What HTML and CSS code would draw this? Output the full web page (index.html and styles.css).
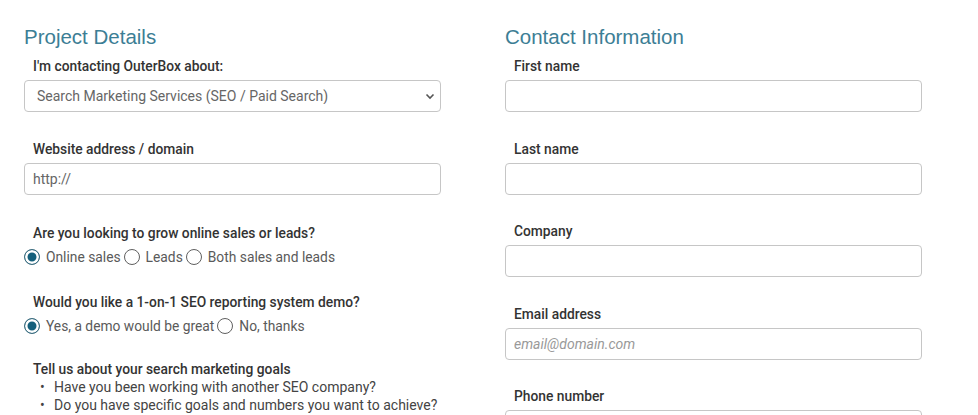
FILE: index.html
```html
<!DOCTYPE html>
<html lang="en">
<head>
  <meta charset="UTF-8" />
  <meta name="viewport" content="width=device-width, initial-scale=1.0" />
  <title>Contact OuterBox</title>
  <link rel="stylesheet" href="styles.css">
</head>
<body>
  <form class="contact-form">
    <section class="column">
      <h2>Project Details</h2>

      <div class="field">
        <label for="topic">I'm contacting OuterBox about:</label>
        <div class="select-wrap">
          <select id="topic">
            <option>Search Marketing Services (SEO / Paid Search)</option>
          </select>
          <svg class="chevron" width="10" height="7" viewBox="0 0 10 7">
            <path d="M1.5 1.5 L5 5 L8.5 1.5" fill="none" stroke="#555" stroke-width="1.6" />
          </svg>
        </div>
      </div>

      <div class="field field-website">
        <label for="website">Website address / domain</label>
        <input id="website" type="text" value="http://">
      </div>

      <div class="field field-radio">
        <label>Are you looking to grow online sales or leads?</label>
        <div class="radios">
          <input type="radio" name="goal" id="goal-sales" checked><label for="goal-sales">Online sales</label>
          <input type="radio" name="goal" id="goal-leads"><label for="goal-leads">Leads</label>
          <input type="radio" name="goal" id="goal-both"><label for="goal-both">Both sales and leads</label>
        </div>
      </div>

      <div class="field field-radio field-demo">
        <label>Would you like a 1-on-1 SEO reporting system demo?</label>
        <div class="radios">
          <input type="radio" name="demo" id="demo-yes" checked><label for="demo-yes">Yes, a demo would be great</label>
          <input type="radio" name="demo" id="demo-no"><label for="demo-no">No, thanks</label>
        </div>
      </div>

      <div class="field">
        <label for="goals">Tell us about your search marketing goals</label>
        <ul class="hints">
          <li>Have you been working with another SEO company?</li>
          <li>Do you have specific goals and numbers you want to achieve?</li>
        </ul>
      </div>
    </section>

    <section class="column">
      <h2>Contact Information</h2>

      <div class="field">
        <label for="first">First name</label>
        <input id="first" type="text">
      </div>

      <div class="field">
        <label for="last">Last name</label>
        <input id="last" type="text">
      </div>

      <div class="field">
        <label for="company">Company</label>
        <input id="company" type="text">
      </div>

      <div class="field">
        <label for="email">Email address</label>
        <input id="email" type="email" placeholder="email@domain.com">
      </div>

      <div class="field">
        <label for="phone">Phone number</label>
        <input id="phone" type="tel">
      </div>
    </section>
  </form>
</body>
</html>
```

FILE: styles.css
```css
body {
  font-family: Roboto, 'Liberation Sans', Arial, sans-serif;
  background: #fff;
  color: #333;
  margin: 0;
  padding: 0;
  overflow: hidden;
}
.contact-form {
  display: grid;
  grid-template-columns: 417px 417px;
  column-gap: 64px;
  padding: 24px 0 0 24px;
}
.column {
  display: flex;
  flex-direction: column;
}
.column h2 {
  font-family: 'Liberation Sans', Arial, sans-serif;
  font-weight: normal;
  font-size: 20.5px;
  line-height: 26px;
  color: #3c7e95;
  margin: 0 0 8px;
}
.field {
  display: flex;
  flex-direction: column;
  margin-bottom: 28.5px;
}
.field > label {
  font-size: 13.8px;
  font-weight: 500;
  line-height: 16px;
  color: #333;
  padding-left: 9px;
  margin-bottom: 6px;
}
.field input[type="text"],
.field input[type="email"],
.field input[type="tel"],
.field select {
  box-sizing: border-box;
  width: 100%;
  height: 32px;
  border: 1px solid #c6c6c6;
  border-radius: 4px;
  background: #fff;
  font-family: Roboto, 'Liberation Sans', Arial, sans-serif;
  font-size: 14px;
  color: #666;
  padding: 0 8px;
  margin: 0;
  outline: none;
}
.field input::placeholder {
  font-style: italic;
  color: #999;
}
.select-wrap {
  position: relative;
}
.field select {
  appearance: none;
  -webkit-appearance: none;
  padding-left: 12px;
}
.chevron {
  position: absolute;
  right: 6px;
  top: 13px;
}
.field-website {
  margin-bottom: 30.5px;
}
.field-radio {
  margin-bottom: 29px;
}
.field-radio > label {
  margin-bottom: 8px;
}
.field-demo {
  margin-bottom: 27px;
}
.radios {
  display: flex;
  align-items: center;
  font-size: 13.8px;
  line-height: 16px;
  color: #5a5a5a;
}
.radios input {
  appearance: none;
  -webkit-appearance: none;
  width: 16px;
  height: 16px;
  margin: 0 6px 0 0;
  border: 1px solid #5f5f5f;
  border-radius: 50%;
  box-sizing: border-box;
  background: #fff;
  flex-shrink: 0;
}
.radios input:checked {
  border: 1.5px solid #3f6e80;
  background: #15607c;
  box-shadow: inset 0 0 0 2.5px #fff;
}
.radios label {
  margin-right: 3px;
}
.hints {
  list-style: none;
  margin: -5px 0 0;
  padding: 0 0 0 16px;
  font-size: 14px;
  line-height: 18px;
  color: #444;
}
.hints li::before {
  content: "•";
  display: inline-block;
  width: 14px;
}
```
